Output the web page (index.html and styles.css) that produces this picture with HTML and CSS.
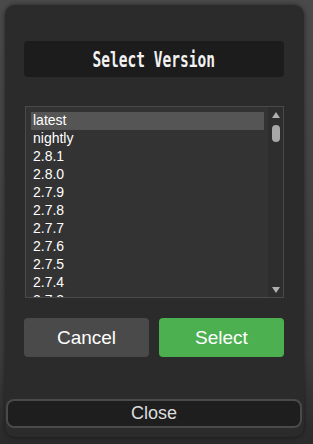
FILE: index.html
```html
<!DOCTYPE html>
<html lang="en">
<head>
  <meta charset="UTF-8" />
  <meta name="viewport" content="width=device-width, initial-scale=1.0"/>
  <title>Select Version</title>
  <link rel="stylesheet" href="styles.css">
</head>
<body>
  <div class="panel">
    <div class="content">
      <div class="title"><span>Select Version</span></div>

      <div class="listbox">
        <ul class="items">
          <li class="selected">latest</li>
          <li>nightly</li>
          <li>2.8.1</li>
          <li>2.8.0</li>
          <li>2.7.9</li>
          <li>2.7.8</li>
          <li>2.7.7</li>
          <li>2.7.6</li>
          <li>2.7.5</li>
          <li>2.7.4</li>
          <li>2.7.3</li>
        </ul>
        <div class="scrollbar">
          <span class="arrow up"></span>
          <span class="thumb"></span>
          <span class="track"></span>
          <span class="arrow down"></span>
        </div>
      </div>

      <div class="actions">
        <button class="cancel">Cancel</button>
        <button class="select">Select</button>
      </div>
    </div>

    <button class="close">Close</button>
  </div>
</body>
</html>
```

FILE: styles.css
```css
* {
  box-sizing: border-box;
}

body {
  margin: 0;
  height: 444px;
  background: linear-gradient(#4a4a4a, #3c3c3c 80%, #2a2a2a);
  font-family: 'Liberation Sans', Arial, sans-serif;
  overflow: hidden;
}

.panel {
  margin: 5px 9px 0 5px;
  height: 432px;
  background-color: #2b2b2b;
  border-radius: 10px;
  box-shadow: 0 0 5px rgba(0, 0, 0, 0.5);
  display: flex;
  flex-direction: column;
}

.content {
  flex: 1;
  padding: 36px 20px 0 19px;
}

.title {
  height: 36px;
  background-color: #1c1c1c;
  border-radius: 4px;
  display: flex;
  justify-content: center;
  align-items: center;
  color: #f2f2f2;
}

.title span {
  display: inline-block;
  font-family: 'DejaVu Sans Mono', monospace;
  font-weight: bold;
  font-size: 22px;
  transform: scaleX(0.66);
  white-space: nowrap;
}

.listbox {
  margin: 29px 0 0 1px;
  height: 192px;
  border: 1px solid #4a4a4a;
  background-color: #333;
  display: flex;
  overflow: hidden;
}

.items {
  flex: 1;
  list-style: none;
  margin: 0;
  padding: 5px 4px 0 5px;
  color: #fff;
  font-size: 14px;
}

.items li {
  height: 18px;
  line-height: 17px;
  padding-left: 2px;
}

.items .selected {
  background-color: #555;
}

.scrollbar {
  width: 15px;
  background-color: #2e2e2e;
  display: flex;
  flex-direction: column;
  align-items: center;
  padding: 5px 0 4px;
}

.arrow {
  width: 0;
  height: 0;
  border-left: 4px solid transparent;
  border-right: 4px solid transparent;
}

.arrow.up {
  border-bottom: 6px solid #b0b0b0;
}

.arrow.down {
  border-top: 6px solid #b0b0b0;
}

.thumb {
  width: 8px;
  height: 17px;
  margin-top: 7px;
  border-radius: 4px;
  background-color: #a8a8a8;
}

.track {
  flex: 1;
}

.actions {
  margin-top: 20px;
  display: grid;
  grid-template-columns: 1fr 1fr;
  gap: 10px;
}

button {
  font-family: 'Liberation Sans', Arial, sans-serif;
  border: none;
  cursor: pointer;
}

.actions button {
  height: 39px;
  border-radius: 4px;
  color: #fff;
  font-size: 19px;
}

.cancel {
  background-color: #4a4a4a;
}

.select {
  background-color: #4caf50;
}

.close {
  margin: 0 2px 9px 1px;
  height: 29px;
  background-color: #1e1e1e;
  border: 2px solid #4a4a4a;
  border-radius: 8px;
  color: #ddd;
  font-size: 18px;
}
```
